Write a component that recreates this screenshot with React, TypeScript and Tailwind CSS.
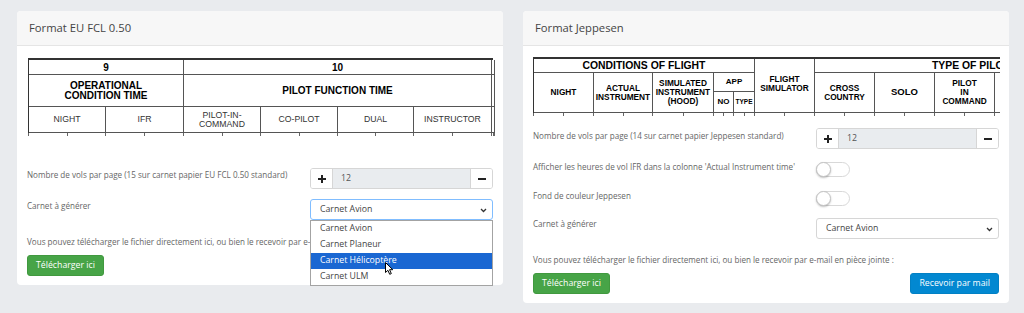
import React from "react";

const B = "border-r border-b border-[#555]";
const C = "flex items-center justify-center text-center";

function Ticks({ cols }: { cols: number }) {
  return (
    <>
      {Array.from({ length: cols }).map((_, i) => (
        <div key={i} className="flex h-[3px]">
          <div className="flex-1 border-r border-[#666]" />
          <div className="flex-1 border-r border-[#666]" />
        </div>
      ))}
    </>
  );
}

function LeftTable() {
  return (
    <div className="mt-[1px] ml-[1px] font-['Liberation_Sans',Arial,sans-serif] text-black">
      <div className="grid grid-cols-[77px_78px_77px_77px_76px_78px_3px] grid-rows-[15px_32px_26px] border-t-2 border-l border-[#333]">
        <div className={`col-start-1 col-span-2 row-start-1 ${B} ${C} font-bold text-[10px]`}>9</div>
        <div className={`col-start-3 col-span-4 row-start-1 ${B} ${C} font-bold text-[10px]`}>10</div>
        <div className={`col-start-7 row-start-1 ${B}`} />
        <div className={`col-start-1 col-span-2 row-start-2 ${B} ${C} font-bold text-[10px] leading-[10px]`}>
          OPERATIONAL
          <br />
          CONDITION TIME
        </div>
        <div className={`col-start-3 col-span-4 row-start-2 ${B} ${C} font-bold text-[10px]`}>PILOT FUNCTION TIME</div>
        <div className={`col-start-7 row-start-2 ${B}`} />
        <div className={`col-start-1 row-start-3 ${B} ${C} text-[8.7px] text-[#333]`}>NIGHT</div>
        <div className={`col-start-2 row-start-3 ${B} ${C} text-[8.7px] text-[#333]`}>IFR</div>
        <div className={`col-start-3 row-start-3 ${B} ${C} text-[8.7px] leading-[9px] text-[#333]`}>
          PILOT-IN-
          <br />
          COMMAND
        </div>
        <div className={`col-start-4 row-start-3 ${B} ${C} text-[8.7px] text-[#333]`}>CO-PILOT</div>
        <div className={`col-start-5 row-start-3 ${B} ${C} text-[8.7px] text-[#333]`}>DUAL</div>
        <div className={`col-start-6 row-start-3 ${B} ${C} text-[8.7px] text-[#333]`}>INSTRUCTOR</div>
        <div className={`col-start-7 row-start-3 ${B}`} />
      </div>
      <div className="grid grid-cols-[77px_78px_77px_77px_76px_78px_3px] border-l border-[#666]">
        <Ticks cols={7} />
      </div>
    </div>
  );
}

function RightTable() {
  return (
    <div className="w-[467px] overflow-hidden font-['Liberation_Sans',Arial,sans-serif] text-black">
      <div className="w-[521px] grid grid-cols-[60px_59px_61px_20px_21px_60px_60px_60px_60px_60px] grid-rows-[14px_19px_21px] border-t-2 border-l border-[#333]">
        <div className={`col-start-1 col-span-5 row-start-1 ${B} ${C} font-bold text-[10.4px]`}>CONDITIONS OF FLIGHT</div>
        <div className={`col-start-6 row-start-1 row-span-3 ${B} ${C} pb-[4px] font-bold text-[8.3px] leading-[9px]`}>
          FLIGHT
          <br />
          SIMULATOR
        </div>
        <div className={`col-start-7 col-span-4 row-start-1 ${B} flex items-center pl-[117px] whitespace-nowrap font-bold text-[10.4px]`}>
          TYPE OF PILOT TIME
        </div>
        <div className={`col-start-1 row-start-2 row-span-2 ${B} ${C} font-bold text-[8.3px]`}>NIGHT</div>
        <div className={`col-start-2 row-start-2 row-span-2 ${B} ${C} font-bold text-[8.3px] leading-[9px]`}>
          ACTUAL
          <br />
          INSTRUMENT
        </div>
        <div className={`col-start-3 row-start-2 row-span-2 ${B} ${C} font-bold text-[8.3px] leading-[9px]`}>
          SIMULATED
          <br />
          INSTRUMENT
          <br />
          (HOOD)
        </div>
        <div className={`col-start-4 col-span-2 row-start-2 ${B} ${C} font-bold text-[8px]`}>APP</div>
        <div className={`col-start-4 row-start-3 ${B} ${C} font-bold text-[8px]`}>NO</div>
        <div className={`col-start-5 row-start-3 ${B} ${C} font-bold text-[6.5px]`}>TYPE</div>
        <div className={`col-start-7 row-start-2 row-span-2 ${B} ${C} font-bold text-[8.3px] leading-[9px]`}>
          CROSS
          <br />
          COUNTRY
        </div>
        <div className={`col-start-8 row-start-2 row-span-2 ${B} ${C} font-bold text-[9.5px]`}>SOLO</div>
        <div className={`col-start-9 row-start-2 row-span-2 ${B} ${C} font-bold text-[8.3px] leading-[9px]`}>
          PILOT
          <br />
          IN
          <br />
          COMMAND
        </div>
        <div className={`col-start-10 row-start-2 row-span-2 ${B}`} />
      </div>
      <div className="w-[521px] grid grid-cols-[60px_59px_61px_20px_21px_60px_60px_60px_60px_60px] border-l border-[#666]">
        <Ticks cols={10} />
      </div>
    </div>
  );
}

function Card({ title, children }: { title: string; children: React.ReactNode }) {
  return (
    <div className="w-[486px] bg-white rounded-[4px]">
      <div className="h-[35px] flex items-center px-[12px] bg-[#f7f7f7] border-b border-[#e5e5e5] rounded-t-[4px] text-[11.25px] text-[#444]">
        {title}
      </div>
      <div className="px-[10px] pt-[11px] pb-[9px]">{children}</div>
    </div>
  );
}

function Label({ children, className = "" }: { children: React.ReactNode; className?: string }) {
  return <div className={`w-[283px] text-[8.1px] leading-[12px] text-[#666] ${className}`}>{children}</div>;
}

function Stepper() {
  return (
    <div className="w-[183px] h-[21px] flex border border-[#d6d6d6] rounded-[3px] text-[8.75px] overflow-hidden">
      <div className="w-[22px] flex items-center justify-center border-r border-[#d6d6d6] bg-white">
        <svg width="8" height="8" viewBox="0 0 8 8">
          <rect x="0" y="3" width="8" height="2" fill="#222" />
          <rect x="3" y="0" width="2" height="8" fill="#222" />
        </svg>
      </div>
      <div className="flex-1 flex items-center pl-[8px] bg-[#e9ecef] text-[#555]">12</div>
      <div className="w-[22px] flex items-center justify-center border-l border-[#d6d6d6] bg-white">
        <svg width="8" height="2" viewBox="0 0 8 2">
          <rect x="0" y="0" width="8" height="2" fill="#222" />
        </svg>
      </div>
    </div>
  );
}

function Chevron() {
  return (
    <svg width="7" height="5" viewBox="0 0 7 5" className="absolute right-[5px] top-[8px]">
      <path d="M1 1 L3.5 3.5 L6 1" fill="none" stroke="#333" strokeWidth="1.3" />
    </svg>
  );
}

function Cursor() {
  return (
    <svg width="9" height="13" viewBox="0 0 9 13" className="absolute left-[74px] top-[41px]">
      <path
        d="M0.5 0.5 L0.5 10.5 L2.9 8.3 L4.7 12.3 L6.3 11.6 L4.6 7.7 L7.8 7.7 Z"
        fill="#fff"
        stroke="#000"
        strokeWidth="1"
        strokeLinejoin="round"
      />
    </svg>
  );
}

function Switch() {
  return (
    <div className="relative mt-[1px] w-[34px] h-[15px] rounded-full border border-[#d8d8d8] bg-white">
      <div className="absolute -left-[1px] -top-[1px] w-[15px] h-[15px] rounded-full bg-white border border-[#c4c4c4] shadow-[0_1px_2px_rgba(0,0,0,0.25)]" />
    </div>
  );
}

function Buttons() {
  return (
    <div className="mt-[7px] flex justify-between">
      <div className="h-[21px] px-[8px] flex items-center rounded-[3px] bg-[#47a447] border border-[#41993f] text-white text-[8.75px]">
        Télécharger ici
      </div>
      <div className="h-[21px] px-[8px] flex items-center rounded-[3px] bg-[#0288d1] border border-[#0280c4] text-white text-[8.75px]">
        Recevoir par mail
      </div>
    </div>
  );
}

const DOWNLOAD_TEXT =
  "Vous pouvez télécharger le fichier directement ici, ou bien le recevoir par e-mail en pièce jointe :";

function LeftCard() {
  const options = ["Carnet Avion", "Carnet Planeur", "Carnet Hélicoptère", "Carnet ULM"];
  return (
    <Card title="Format EU FCL 0.50">
      <LeftTable />
      <div className="mt-[32px] flex items-start">
        <Label className="pt-[1px]">Nombre de vols par page (15 sur carnet papier EU FCL 0.50 standard)</Label>
        <Stepper />
      </div>
      <div className="mt-[10px] flex items-start">
        <Label className="pt-[1px]">Carnet à générer</Label>
        <div className="relative w-[183px] h-[21px] border border-[#80bdff] rounded-[3px] bg-white flex items-center pl-[9px] text-[8.75px] text-[#444]">
          Carnet Avion
          <Chevron />
          <div className="absolute -left-[1px] top-[20px] w-[183px] z-10 bg-white border border-[#a3a3a3]">
            {options.map((o, i) => (
              <div
                key={o}
                className={
                  i === 2
                    ? "h-[16px] flex items-center pl-[9px] text-[8.75px] bg-[#1a67d2] text-white"
                    : "h-[16px] flex items-center pl-[9px] text-[8.75px] text-[#444]"
                }
              >
                {o}
              </div>
            ))}
            <Cursor />
          </div>
        </div>
      </div>
      <div className="mt-[16px] text-[8.1px] leading-[12px] text-[#666] whitespace-nowrap">{DOWNLOAD_TEXT}</div>
      <Buttons />
    </Card>
  );
}

function RightCard() {
  return (
    <Card title="Format Jeppesen">
      <RightTable />
      <div className="mt-[12px] flex items-start">
        <Label className="pt-[2px]">Nombre de vols par page (14 sur carnet papier Jeppesen standard)</Label>
        <Stepper />
      </div>
      <div className="mt-[12px] flex items-start">
        <Label>Afficher les heures de vol IFR dans la colonne 'Actual Instrument time'</Label>
        <Switch />
      </div>
      <div className="mt-[13px] flex items-start">
        <Label>Fond de couleur Jeppesen</Label>
        <Switch />
      </div>
      <div className="mt-[12px] flex items-start">
        <Label>Carnet à générer</Label>
        <div className="relative w-[183px] h-[21px] border border-[#d6d6d6] rounded-[3px] bg-white flex items-center pl-[9px] text-[8.75px] text-[#444]">
          Carnet Avion
          <Chevron />
        </div>
      </div>
      <div className="mt-[15px] text-[8.1px] leading-[12px] text-[#666] whitespace-nowrap">{DOWNLOAD_TEXT}</div>
      <Buttons />
    </Card>
  );
}

export default function App() {
  return (
    <div className="min-h-[313px] w-[1024px] bg-[#e9ebee] pt-[11px] pl-[17px] flex items-start gap-[20px] font-['Open_Sans',sans-serif]">
      <LeftCard />
      <RightCard />
    </div>
  );
}
